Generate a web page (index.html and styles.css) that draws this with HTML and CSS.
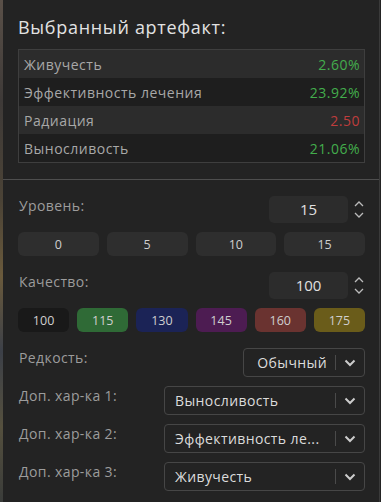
FILE: index.html
```html
<!DOCTYPE html>
<html lang="ru">
<head>
    <meta charset="UTF-8">
    <meta name="viewport" content="width=device-width, initial-scale=1.0">
    <title>Артефакт</title>
    <link rel="stylesheet" href="styles.css">
</head>
<body>
    <div class="backdrop"></div>
    <div class="panel">
        <div class="section">
            <h2 class="title">Выбранный артефакт:</h2>
            <div class="stats">
                <div class="stat"><span>Живучесть</span><span class="good">2.60%</span></div>
                <div class="stat"><span>Эффективность лечения</span><span class="good">23.92%</span></div>
                <div class="stat"><span>Радиация</span><span class="bad">2.50</span></div>
                <div class="stat"><span>Выносливость</span><span class="good">21.06%</span></div>
            </div>
        </div>

        <div class="section settings">
            <div class="row">
                <span class="label">Уровень:</span>
                <div class="number">
                    <div class="number-value">15</div>
                    <div class="spin">
                        <svg viewBox="0 0 10 6" width="10" height="6"><path d="M1 5 L5 1 L9 5" fill="none" stroke="#bbb" stroke-width="1.3"/></svg>
                        <svg viewBox="0 0 10 6" width="10" height="6"><path d="M1 1 L5 5 L9 1" fill="none" stroke="#bbb" stroke-width="1.3"/></svg>
                    </div>
                </div>
            </div>
            <div class="presets four">
                <button class="preset">0</button>
                <button class="preset">5</button>
                <button class="preset">10</button>
                <button class="preset">15</button>
            </div>

            <div class="row">
                <span class="label">Качество:</span>
                <div class="number">
                    <div class="number-value">100</div>
                    <div class="spin">
                        <svg viewBox="0 0 10 6" width="10" height="6"><path d="M1 5 L5 1 L9 5" fill="none" stroke="#bbb" stroke-width="1.3"/></svg>
                        <svg viewBox="0 0 10 6" width="10" height="6"><path d="M1 1 L5 5 L9 1" fill="none" stroke="#bbb" stroke-width="1.3"/></svg>
                    </div>
                </div>
            </div>
            <div class="presets six">
                <button class="preset q-100">100</button>
                <button class="preset q-115">115</button>
                <button class="preset q-130">130</button>
                <button class="preset q-145">145</button>
                <button class="preset q-160">160</button>
                <button class="preset q-175">175</button>
            </div>

            <div class="fields">
                <div class="row">
                    <span class="label">Редкость:</span>
                    <div class="select short">
                        <span class="select-text">Обычный</span>
                        <span class="sep"></span>
                        <svg class="chev" viewBox="0 0 12 8" width="12" height="8"><path d="M1.5 1.5 L6 6 L10.5 1.5" fill="none" stroke="#ccc" stroke-width="2"/></svg>
                    </div>
                </div>
                <div class="row">
                    <span class="label">Доп. хар-ка 1:</span>
                    <div class="select">
                        <span class="select-text">Выносливость</span>
                        <span class="sep"></span>
                        <svg class="chev" viewBox="0 0 12 8" width="12" height="8"><path d="M1.5 1.5 L6 6 L10.5 1.5" fill="none" stroke="#ccc" stroke-width="2"/></svg>
                    </div>
                </div>
                <div class="row">
                    <span class="label">Доп. хар-ка 2:</span>
                    <div class="select">
                        <span class="select-text">Эффективность ле...</span>
                        <span class="sep"></span>
                        <svg class="chev" viewBox="0 0 12 8" width="12" height="8"><path d="M1.5 1.5 L6 6 L10.5 1.5" fill="none" stroke="#ccc" stroke-width="2"/></svg>
                    </div>
                </div>
                <div class="row">
                    <span class="label">Доп. хар-ка 3:</span>
                    <div class="select">
                        <span class="select-text">Живучесть</span>
                        <span class="sep"></span>
                        <svg class="chev" viewBox="0 0 12 8" width="12" height="8"><path d="M1.5 1.5 L6 6 L10.5 1.5" fill="none" stroke="#ccc" stroke-width="2"/></svg>
                    </div>
                </div>
            </div>
        </div>
    </div>
</body>
</html>
```

FILE: styles.css
```css
body {
    margin: 0;
    height: 502px;
    overflow: hidden;
    display: flex;
    background: #232323;
    font-family: 'Open Sans', 'Noto Sans', sans-serif;
    color: #a4a4a4;
}
.backdrop {
    width: 3px;
    flex-shrink: 0;
    background: linear-gradient(180deg, #5a5048 0%, #3e3a38 20%, #4b4336 40%, #6a5a3c 55%, #3c4048 70%, #55503e 85%, #3a3c3a 100%);
}
.panel {
    flex: 1;
    background: #232323;
    border-right: 1px solid #3a3a3a;
    margin-right: 1px;
}
.section {
    padding: 15px 14px 16px 15px;
}
.title {
    margin: 0 0 10px;
    font-size: 18px;
    font-weight: 400;
    line-height: 24px;
    color: #e2e2e2;
    letter-spacing: 0.7px;
}
.stats {
    border: 1px solid #3e3e3e;
}
.stat {
    display: flex;
    justify-content: space-between;
    align-items: center;
    height: 28px;
    padding: 0 4px 0 5px;
    font-size: 14px;
    letter-spacing: 0.5px;
    color: #a8a8a8;
    background: #1e1e1e;
}
.stat:nth-child(odd) {
    background: #2c2c2c;
}
.good {
    color: #43ad4c;
}
.bad {
    color: #bf3d3d;
}
.settings {
    border-top: 1px solid #4e4e4e;
    padding-top: 16px;
}
.row {
    display: flex;
    justify-content: space-between;
    align-items: flex-start;
}
.label {
    font-size: 14px;
    line-height: 20px;
    letter-spacing: 0.4px;
    color: #9c9c9c;
    padding-left: 1px;
}
.number {
    display: flex;
    align-items: center;
    gap: 4px;
}
.number-value {
    width: 79px;
    height: 27px;
    line-height: 27px;
    text-align: center;
    background: #2c2c2c;
    border-radius: 5px;
    color: #e0e0e0;
    font-size: 15px;
}
.spin {
    width: 13px;
    display: flex;
    flex-direction: column;
    align-items: center;
    gap: 5px;
}
.spin svg {
    display: block;
}
.presets {
    display: grid;
    gap: 8px;
    margin: 9px 0 16px;
}
.presets.four {
    grid-template-columns: repeat(4, 1fr);
}
.presets.six {
    grid-template-columns: repeat(6, 1fr);
}
.preset {
    height: 24px;
    border: none;
    border-radius: 6px;
    background: #2e2e2e;
    color: #cfcfcf;
    font-family: inherit;
    font-size: 12.5px;
    padding: 0;
}
.q-100 { background: #191919; }
.q-115 { background: #2f6a36; }
.q-130 { background: #1b2356; }
.q-145 { background: #4d1c52; }
.q-160 { background: #6a3330; }
.q-175 { background: #6a5c1a; }
.fields {
    display: flex;
    flex-direction: column;
    gap: 9px;
}
.select {
    height: 27px;
    border: 1px solid #464646;
    border-radius: 4px;
    display: flex;
    align-items: center;
    padding-left: 10px;
    box-sizing: content-box;
    width: 189px;
}
.select.short {
    width: 110px;
}
.select-text {
    flex: 1;
    min-width: 0;
    white-space: nowrap;
    font-size: 14px;
    letter-spacing: 0.4px;
    color: #dcdcdc;
}
.select.short .select-text {
    text-align: right;
}
.sep {
    width: 1px;
    height: 15px;
    background: #4a4a4a;
    margin: 0 8px;
    flex-shrink: 0;
}
.chev {
    margin-right: 8px;
    flex-shrink: 0;
}
```
